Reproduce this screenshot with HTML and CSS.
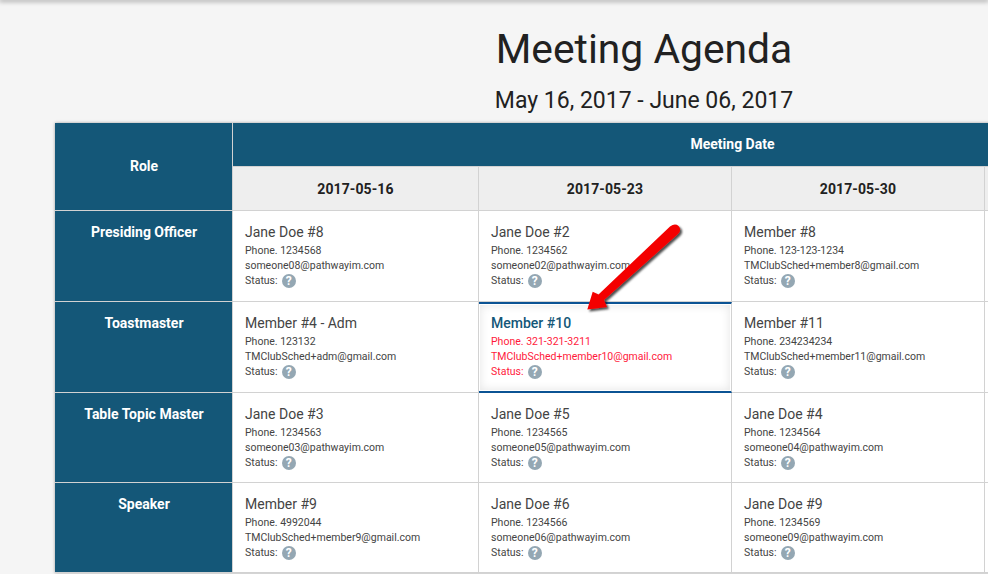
FILE: index.html
```html
<!DOCTYPE html>
<html lang="en">
<head>
<meta charset="utf-8">
<title>Meeting Agenda</title>
<link rel="stylesheet" href="styles.css">
</head>
<body>
<div class="topbar"></div>
<main class="page">
  <h1 class="title">Meeting Agenda</h1>
  <h2 class="range">May 16, 2017 - June 06, 2017</h2>
  <table class="agenda">
    <colgroup><col class="c-role"><col class="c-1"><col class="c-2"><col class="c-3"><col class="c-4"></colgroup>
    <thead>
      <tr class="r-head1"><th class="role head-role" rowspan="2">Role</th><th class="group" colspan="4">Meeting Date</th></tr>
      <tr class="r-head2"><th class="date">2017-05-16</th><th class="date">2017-05-23</th><th class="date">2017-05-30</th><th class="date"></th></tr>
    </thead>
    <tbody>
      <tr class="r-tall">
        <th class="role">Presiding Officer</th>
        <td><div class="name">Jane Doe #8</div><div class="line">Phone. 1234568</div><div class="line">someone08@pathwayim.com</div><div class="line">Status: <span class="help">?</span></div></td>
        <td><div class="name">Jane Doe #2</div><div class="line">Phone. 1234562</div><div class="line">someone02@pathwayim.com</div><div class="line">Status: <span class="help">?</span></div></td>
        <td><div class="name">Member #8</div><div class="line">Phone. 123-123-1234</div><div class="line">TMClubSched+member8@gmail.com</div><div class="line">Status: <span class="help">?</span></div></td>
        <td></td>
      </tr>
      <tr class="r-tall">
        <th class="role">Toastmaster</th>
        <td><div class="name">Member #4 - Adm</div><div class="line">Phone. 123132</div><div class="line">TMClubSched+adm@gmail.com</div><div class="line">Status: <span class="help">?</span></div></td>
        <td class="me"><div class="name">Member #10</div><div class="line">Phone. 321-321-3211</div><div class="line">TMClubSched+member10@gmail.com</div><div class="line">Status: <span class="help">?</span></div></td>
        <td><div class="name">Member #11</div><div class="line">Phone. 234234234</div><div class="line">TMClubSched+member11@gmail.com</div><div class="line">Status: <span class="help">?</span></div></td>
        <td></td>
      </tr>
      <tr class="r-short">
        <th class="role">Table Topic Master</th>
        <td><div class="name">Jane Doe #3</div><div class="line">Phone. 1234563</div><div class="line">someone03@pathwayim.com</div><div class="line">Status: <span class="help">?</span></div></td>
        <td><div class="name">Jane Doe #5</div><div class="line">Phone. 1234565</div><div class="line">someone05@pathwayim.com</div><div class="line">Status: <span class="help">?</span></div></td>
        <td><div class="name">Jane Doe #4</div><div class="line">Phone. 1234564</div><div class="line">someone04@pathwayim.com</div><div class="line">Status: <span class="help">?</span></div></td>
        <td></td>
      </tr>
      <tr class="r-short">
        <th class="role">Speaker</th>
        <td><div class="name">Member #9</div><div class="line">Phone. 4992044</div><div class="line">TMClubSched+member9@gmail.com</div><div class="line">Status: <span class="help">?</span></div></td>
        <td><div class="name">Jane Doe #6</div><div class="line">Phone. 1234566</div><div class="line">someone06@pathwayim.com</div><div class="line">Status: <span class="help">?</span></div></td>
        <td><div class="name">Jane Doe #9</div><div class="line">Phone. 1234569</div><div class="line">someone09@pathwayim.com</div><div class="line">Status: <span class="help">?</span></div></td>
        <td></td>
      </tr>
    </tbody>
  </table>
</main>
<svg class="arrow" width="110" height="100" viewBox="0 0 110 100" aria-hidden="true">
  <defs>
    <filter id="arrow-shadow" x="-20%" y="-20%" width="150%" height="150%">
      <feDropShadow dx="2" dy="2" stdDeviation="1.2" flood-color="#000" flood-opacity="0.7"/>
    </filter>
  </defs>
  <path class="arrow-fill" filter="url(#arrow-shadow)" d="M90 4.500 Q95 1 98.500 4 Q102 8 98 12 L24 78 L27 85 L7.300 87.500 L12.700 69.700 L18.500 72.500 Z"/>
</svg>
</body>
</html>
```
FILE: styles.css
```css
html, body {
  margin: 0;
  padding: 0;
  height: 574px;
  overflow: hidden;
  background: #f5f5f5;
  font-family: Roboto, "Liberation Sans", sans-serif;
  color: #333;
}

.topbar {
  height: 0;
  box-shadow: 0 0 5px 1px rgba(0, 0, 0, 0.55);
}

.page {
  width: 1178px;
  margin-left: 55px;
  text-align: center;
}

.title {
  margin: 0;
  padding-top: 25px;
  font-size: 40.8px;
  line-height: 48px;
  font-weight: 400;
  color: #212121;
}

.range {
  margin: 0 0 8px;
  padding-top: 14px;
  font-size: 23px;
  line-height: 28px;
  font-weight: 400;
  color: #212121;
}

.agenda {
  width: 1178px;
  table-layout: fixed;
  border-collapse: separate;
  border-spacing: 0;
  background: #fff;
  box-shadow: 0 0 3px rgba(0, 0, 0, 0.35);
  text-align: left;
}

.c-role { width: 178px; }
.c-1 { width: 246px; }
.c-2 { width: 253px; }
.c-3 { width: 253px; }

.r-head1 { height: 44px; }
.r-head2 { height: 44px; }
.r-tall { height: 91px; }
.r-short { height: 90px; }

.agenda th, .agenda td {
  padding: 0;
  box-sizing: border-box;
  border-right: 1px solid #d2d2d2;
  border-bottom: 1px solid #d2d2d2;
}

.agenda .role {
  background: #145778;
  color: #fff;
  font-size: 14px;
  font-weight: 700;
  text-align: center;
  vertical-align: top;
  padding: 13px 0 0 1px;
  line-height: 16px;
}

.agenda .head-role {
  vertical-align: middle;
  padding: 0 0 2px 1px;
}

.agenda .group {
  background: #145778;
  color: #fff;
  font-size: 14px;
  font-weight: 700;
  text-align: center;
  vertical-align: middle;
  padding-bottom: 2px;
}

.date {
  background: #eee;
  color: #212121;
  font-size: 14px;
  font-weight: 700;
  letter-spacing: 0.1px;
  text-align: center;
}

.agenda td {
  vertical-align: top;
  padding: 12px 12px 0;
  color: #444;
}

.name {
  font-size: 14px;
  line-height: 18px;
  margin-bottom: 2px;
}

.line {
  font-size: 10.5px;
  line-height: 15px;
}

.help {
  display: inline-block;
  width: 14px;
  height: 14px;
  margin: 1px 0 0 1.5px;
  border-radius: 50%;
  background: #94a7b3;
  color: #fff;
  font-size: 12px;
  font-weight: 700;
  line-height: 14px;
  text-align: center;
  vertical-align: top;
}

.agenda td.me {
  color: #ff1a3c;
  border-top: 2px solid #0b5394;
  border-bottom: 2px solid #0b5394;
  box-shadow: inset 0 0 0 1px #fff, inset 0 0 8px 2px rgba(0, 0, 0, 0.09);
  padding-top: 10px;
}

.me .name {
  color: #145778;
  font-weight: 500;
}

.arrow {
  position: absolute;
  left: 580px;
  top: 222px;
  overflow: visible;
}

.arrow-fill {
  fill: #f40000;
}
```
